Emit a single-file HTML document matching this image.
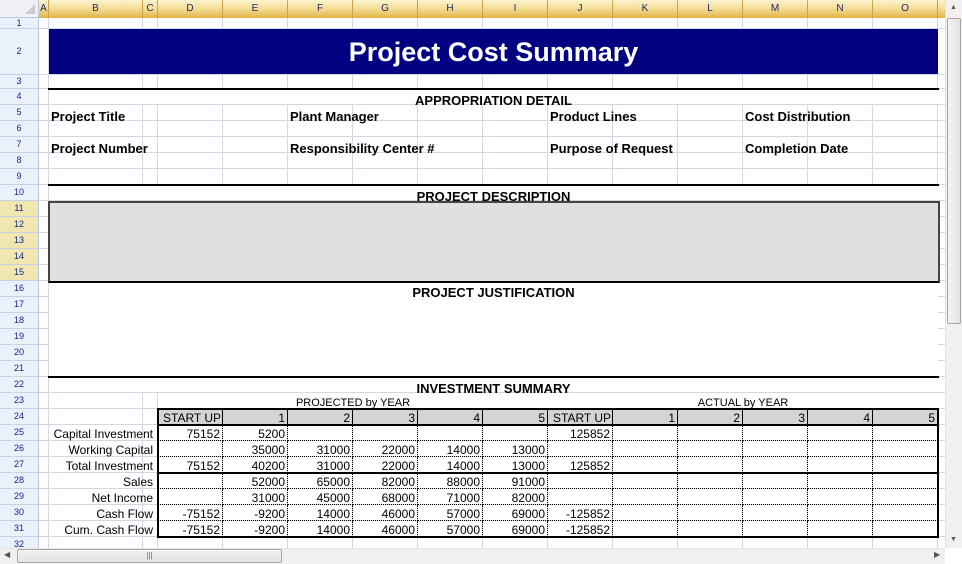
<!DOCTYPE html>
<html><head><meta charset="utf-8"><style>
*{margin:0;padding:0;box-sizing:border-box}
body{width:962px;height:564px;overflow:hidden;background:#fff;font-family:"Liberation Sans",Arial,sans-serif;position:relative}
.a{position:absolute}
.vl{position:absolute;width:1px;background:#d0d7e5}
.hl{position:absolute;height:1px;background:#d0d7e5}
.ch{position:absolute;top:0;height:18px;background:linear-gradient(#fcf3cf,#f3d98a 55%,#e0b24a);border-right:1px solid #c9a44a;font-size:10px;color:#1a2a6a;text-align:center;line-height:17px}
.rh{position:absolute;left:0;width:39px;background:#eaf1fb;border-bottom:1px solid #c5d1e6;border-right:1px solid #b9c7df;font-size:9px;color:#14248c;text-align:center}
.t{position:absolute;font-size:12px;white-space:nowrap;color:#000}
.b{font-weight:bold;font-size:13px}
.c{position:absolute;font-size:12px;text-align:right;padding-right:2px;padding-top:1px;height:16px;line-height:16px;border-right:1px dotted #000;border-bottom:1px dotted #000}
</style></head><body>
<div id="g"></div>
<script>
var cols=[["A",39,10],["B",49,94],["C",143,15]];var x=158;
"DEFGHIJKLMNO".split("").forEach(function(l){cols.push([l,x,65]);x+=65});
var h="";
h+='<div class="a" style="left:0;top:0;width:39px;height:18px;background:#eef0f4;border-right:1px solid #b9c7df;border-bottom:1px solid #b9c7df"></div>';
h+='<div class="a" style="left:25px;top:4px;width:0;height:0;border-left:10px solid transparent;border-bottom:10px solid #c8ccd4"></div>';
cols.forEach(function(c){h+='<div class="ch" style="left:'+c[1]+'px;width:'+c[2]+'px">'+c[0]+'</div>';h+='<div class="vl" style="left:'+(c[1]+c[2]-1)+'px;top:18px;height:530px"></div>';});
h+='<div class="ch" style="left:938px;width:7px;border:none"></div>';
var rows=[[1,18,11],[2,29,46],[3,75,14]];var y=89;for(var r=4;r<=32;r++){rows.push([r,y,16]);y+=16}
rows.forEach(function(r){var bg=(r[0]>=11&&r[0]<=15)?'background:#f0e6b0;':'';h+='<div class="rh" style="top:'+r[1]+'px;height:'+r[2]+'px;line-height:'+(r[2]-1)+'px;'+bg+'">'+r[0]+'</div>';h+='<div class="hl" style="left:39px;width:906px;top:'+(r[1]+r[2]-1)+'px"></div>';});
document.getElementById("g").innerHTML=h;
</script>
<div class="a" style="left:49px;top:89px;width:889px;height:15px;background:#fff"></div>
<div class="a" style="left:49px;top:185px;width:889px;height:15px;background:#fff"></div>
<div class="a" style="left:49px;top:281px;width:889px;height:95px;background:#fff"></div>
<div class="a" style="left:49px;top:377px;width:889px;height:15px;background:#fff"></div>
<div class="a" style="left:158px;top:393px;width:780px;height:15px;background:#fff"></div>
<div class="a" style="left:49px;top:29px;width:889px;height:45px;background:#000080;color:#fff;font-weight:bold;font-size:27px;text-align:center;line-height:47px">Project Cost Summary</div>
<div class="a" style="left:48px;top:88px;width:891px;height:2px;background:#000"></div>
<div class="t b" style="left:49px;width:889px;text-align:center;top:93px">APPROPRIATION DETAIL</div>
<div class="t b" style="left:51px;top:109px">Project Title</div>
<div class="t b" style="left:290px;top:109px">Plant Manager</div>
<div class="t b" style="left:550px;top:109px">Product Lines</div>
<div class="t b" style="left:745px;top:109px">Cost Distribution</div>
<div class="t b" style="left:51px;top:141px">Project Number</div>
<div class="t b" style="left:290px;top:141px">Responsibility Center #</div>
<div class="t b" style="left:550px;top:141px">Purpose of Request</div>
<div class="t b" style="left:745px;top:141px">Completion Date</div>
<div class="a" style="left:48px;top:184px;width:891px;height:2px;background:#000"></div>
<div class="t b" style="left:49px;width:889px;text-align:center;top:189px">PROJECT DESCRIPTION</div>
<div class="a" style="left:48px;top:201px;width:892px;height:82px;background:#e0e0e0;border:2px solid #444;border-bottom-color:#000"></div>
<div class="t b" style="left:49px;width:889px;text-align:center;top:285px">PROJECT JUSTIFICATION</div>
<div class="a" style="left:48px;top:376px;width:891px;height:2px;background:#000"></div>
<div class="t b" style="left:49px;width:889px;text-align:center;top:381px">INVESTMENT SUMMARY</div>
<div class="t" style="left:158px;width:390px;text-align:center;top:397px;font-size:11px">PROJECTED by YEAR</div>
<div class="t" style="left:548px;width:390px;text-align:center;top:397px;font-size:11px">ACTUAL by YEAR</div>
<div id="inv"></div>
<script>
var hdr=["START UP","1","2","3","4","5","START UP","1","2","3","4","5"];
var labels=["Capital Investment","Working Capital","Total Investment","Sales","Net Income","Cash Flow","Cum. Cash Flow"];
var data=[["75152","5200","","","","","125852"],["","35000","31000","22000","14000","13000",""],["75152","40200","31000","22000","14000","13000","125852"],["","52000","65000","82000","88000","91000",""],["","31000","45000","68000","71000","82000",""],["-75152","-9200","14000","46000","57000","69000","-125852"],["-75152","-9200","14000","46000","57000","69000","-125852"]];
var s="";
hdr.forEach(function(t,i){var l=158+i*65;s+='<div class="a" style="left:'+l+'px;top:409px;width:65px;height:16px;background:#d4d4d4;border-right:1px solid #000;font-size:12px;line-height:18px;'+(i==0||i==6?'text-align:left;padding-left:5px':'text-align:right;padding-right:2px')+'">'+t+'</div>';});
for(var r=0;r<7;r++){var yy=425+r*16;
s+='<div class="t" style="left:49px;width:104px;text-align:right;top:'+(yy+2)+'px">'+labels[r]+'</div>';
for(var i=0;i<12;i++){var v=data[r][i]||"";s+='<div class="c" style="left:'+(158+i*65)+'px;top:'+yy+'px;width:65px">'+v+'</div>';}}
s+='<div class="a" style="left:157px;top:408px;width:782px;height:130px;border:2px solid #000"></div>';
s+='<div class="a" style="left:157px;top:424px;width:782px;height:2px;background:#000"></div>';
s+='<div class="a" style="left:157px;top:472px;width:782px;height:2px;background:#000"></div>';
document.getElementById("inv").innerHTML=s;
</script>
<div class="a" style="left:945px;top:0;width:17px;height:548px;background:#f0f0f0;border-left:1px solid #e3e3e3"></div>
<div class="a" style="left:947px;top:18px;width:14px;height:306px;background:linear-gradient(90deg,#f3f3f3,#e2e2e2);border:1px solid #a8a8a8;border-radius:2px"></div>
<div class="a" style="left:950px;top:4px;font-size:7px;color:#555">▲</div>
<div class="a" style="left:950px;top:536px;font-size:7px;color:#555">▼</div>
<div class="a" style="left:0;top:548px;width:945px;height:16px;background:#f0f0f0;border-top:1px solid #e3e3e3"></div>
<div class="a" style="left:17px;top:549px;width:265px;height:14px;background:linear-gradient(#f3f3f3,#e2e2e2);border:1px solid #a8a8a8;border-radius:2px;font-size:8px;text-align:center;color:#666;line-height:12px">|||</div>
<div class="a" style="left:4px;top:550px;font-size:8px;color:#555">◀</div>
<div class="a" style="left:934px;top:550px;font-size:8px;color:#555">▶</div>
<div class="a" style="left:945px;top:548px;width:17px;height:16px;background:#fff"></div>
</body></html>
